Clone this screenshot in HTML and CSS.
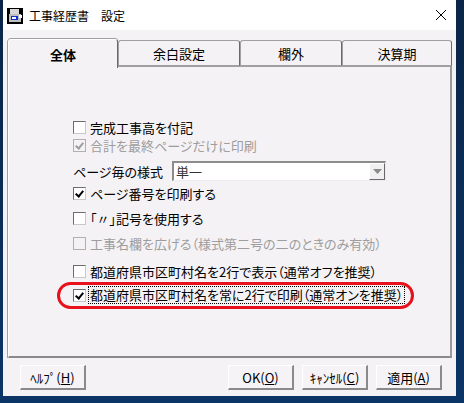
FILE: index.html
```html
<!DOCTYPE html>
<html lang="ja">
<head>
    <meta charset="UTF-8">
    <title>工事経歴書　設定</title>
    <link rel="stylesheet" href="styles.css">
</head>
<body>
    <div class="window">
        <div class="titlebar">
            <svg class="app-icon" width="16" height="16" viewBox="0 0 16 16">
                <rect x="0" y="0" width="16" height="16" fill="#000"/>
                <rect x="3" y="1" width="9" height="6" fill="#d8d8d8"/>
                <rect x="2" y="6" width="12" height="8" fill="#c0c0c0"/>
                <rect x="4" y="8" width="7" height="4" fill="#1030d0"/>
                <rect x="5" y="9" width="4" height="2" fill="#fff"/>
                <rect x="12" y="7" width="3" height="3" fill="#fff"/>
            </svg>
            <span class="title">工事経歴書　設定</span>
            <svg class="close" width="12" height="12" viewBox="0 0 12 12">
                <path d="M1 1 L11 11 M11 1 L1 11" stroke="#000" stroke-width="1"/>
            </svg>
        </div>

        <div class="client">
            <div class="tabs">
                <div class="tab active t1">全体</div>
                <div class="tab t2">余白設定</div>
                <div class="tab t3">欄外</div>
                <div class="tab t4">決算期</div>
            </div>
            <div class="panel">
                <div class="row r1">
                    <span class="check"></span>
                    <span>完成工事高を付記</span>
                </div>
                <div class="row r2 disabled">
                    <span class="check on"></span>
                    <span>合計を最終ページだけに印刷</span>
                </div>
                <div class="row r3">
                    <span class="select-label">ページ毎の様式</span>
                    <div class="select">
                        <span class="select-value">単一</span>
                        <span class="select-btn">
                            <svg width="9" height="5" viewBox="0 0 9 5"><path d="M0 0 H9 L4.5 5 Z" fill="#8a8a8a"/></svg>
                        </span>
                    </div>
                </div>
                <div class="row r4">
                    <span class="check on"></span>
                    <span>ページ番号を印刷する</span>
                </div>
                <div class="row r5">
                    <span class="check"></span>
                    <span>「〃」記号を使用する</span>
                </div>
                <div class="row r6 disabled">
                    <span class="check"></span>
                    <span>工事名欄を広げる（様式第二号の二のときのみ有効）</span>
                </div>
                <div class="row r7">
                    <span class="check"></span>
                    <span>都道府県市区町村名を2行で表示（通常オフを推奨）</span>
                </div>
                <div class="row r8">
                    <span class="check on"></span>
                    <span class="focus">都道府県市区町村名を常に2行で印刷（通常オンを推奨）</span>
                    <span class="mark"></span>
                </div>
            </div>
            <div class="buttons">
                <button class="btn help">ﾍﾙﾌﾟ(<u>H</u>)</button>
                <span class="spacer"></span>
                <button class="btn">OK(<u>O</u>)</button>
                <button class="btn">ｷｬﾝｾﾙ(<u>C</u>)</button>
                <button class="btn">適用(<u>A</u>)</button>
            </div>
        </div>
    </div>
</body>
</html>
```

FILE: styles.css
```css
body {
    margin: 0;
    height: 403px;
    overflow: hidden;
    background: linear-gradient(180deg, #0a2547 0%, #0b3566 100%);
    font-family: "Noto Sans CJK JP", "Noto Sans", sans-serif;
    font-size: 13px;
    font-feature-settings: "palt";
    color: #000;
}
.window {
    margin-left: 3px;
    width: 453px;
    height: 396px;
    background: #f5f2f5;
    display: flex;
    flex-direction: column;
}
.titlebar {
    height: 30px;
    background: #fff;
    display: flex;
    align-items: center;
    padding-left: 4px;
    padding-right: 8px;
}
.app-icon {
    margin-top: 1px;
}
.title {
    margin-left: 6px;
    font-size: 12px;
    font-feature-settings: normal;
    flex: 1;
}
.close {
    margin-right: 1px;
}
.client {
    padding: 8px 4px 0 5px;
    display: flex;
    flex-direction: column;
    flex: 1;
}
.tabs {
    display: flex;
    height: 28px;
    position: relative;
    z-index: 1;
}
.tab {
    box-sizing: border-box;
    height: 28px;
    border: 1px solid #a0a0a0;
    border-right-color: #696969;
    border-bottom: none;
    border-radius: 3px 3px 0 0;
    display: flex;
    align-items: center;
    justify-content: center;
    padding-top: 1px;
    font-feature-settings: normal;
}
.tab.active {
    height: 29px;
    background: #f5f2f5;
    border-left-color: #fff;
    border-top-color: #fff;
    box-shadow: -1px 0 0 #a0a0a0, 0 -1px 0 #a0a0a0;
    font-weight: bold;
    margin-top: 1px;
}
.tab:not(.active) {
    margin-top: 2px;
    height: 26px;
    border-bottom: 1px solid #a0a0a0;
}
.t1 { width: 110px; }
.t2 { width: 122px; }
.t3 { width: 102px; }
.t4 { width: 110px; }
.panel {
    box-sizing: border-box;
    width: 444px;
    height: 292px;
    border-left: 1px solid #fff;
    border-top: 1px solid #a0a0a0;
    border-right: 2px solid #9a9a9a;
    border-bottom: 2px solid #8a8a8a;
    box-shadow: -1px 0 0 #a0a0a0;
    padding: 51px 0 0 64px;
    display: flex;
    flex-direction: column;
}
.row {
    display: flex;
    align-items: center;
    height: 18px;
    position: relative;
    white-space: nowrap;
}
.r3 { margin-top: 7px; height: 20px; }
.r4 { margin-top: 3px; }
.r5 { margin-top: 7px; }
.r6 { margin-top: 7px; }
.r7 { margin-top: 10px; }
.r8 { margin-top: 6px; }
.check {
    box-sizing: border-box;
    width: 13px;
    height: 13px;
    border: 1px solid #6d6d6d;
    border-right-color: #c8c8c8;
    border-bottom-color: #c8c8c8;
    background: #fff;
    margin-right: 4px;
    position: relative;
    flex-shrink: 0;
}
.check.on::after {
    content: "";
    position: absolute;
    left: 3px;
    top: 1px;
    width: 3px;
    height: 6px;
    border: solid #000;
    border-width: 0 2px 2px 0;
    transform: rotate(40deg);
}
.disabled {
    color: #9d9d9d;
}
.disabled .check {
    background: #f5f2f5;
    border-color: #b0b0b0;
}
.disabled .check.on::after {
    border-color: #9d9d9d;
}
.select-label {
    width: 99px;
}
.select {
    box-sizing: border-box;
    width: 214px;
    height: 20px;
    background: #fff;
    border: 2px solid #8c8c8c;
    border-right: 1px solid #ececec;
    border-bottom: 1px solid #ececec;
    display: flex;
    align-items: center;
}
.select-value {
    flex: 1;
    padding-left: 2px;
    color: #333;
}
.select-btn {
    box-sizing: border-box;
    width: 16px;
    height: 17px;
    background: #f0f0f0;
    border: 1px solid #fff;
    border-right-color: #696969;
    border-bottom-color: #696969;
    display: flex;
    align-items: center;
    justify-content: center;
}
.focus {
    outline: 1px dotted #000;
    outline-offset: 0;
    padding: 0 1px;
    margin-left: -1px;
    line-height: 16px;
}
.mark {
    position: absolute;
    left: -16px;
    top: -4px;
    width: 351px;
    height: 21px;
    border: 3px solid #e8101a;
    border-radius: 14px;
}
.buttons {
    display: flex;
    align-items: center;
    margin-top: 7px;
    padding: 0 10px 0 12px;
    gap: 8px;
}
.spacer {
    flex: 1;
}
.btn {
    box-sizing: border-box;
    width: 66px;
    height: 25px;
    font-family: "Noto Sans CJK JP", "Noto Sans", sans-serif;
    font-size: 13px;
    background: #f6f3f6;
    border: 1px solid #fff;
    border-right: 2px solid #8a8a8a;
    border-bottom: 2px solid #8a8a8a;
    padding: 0;
    color: #000;
}
```
